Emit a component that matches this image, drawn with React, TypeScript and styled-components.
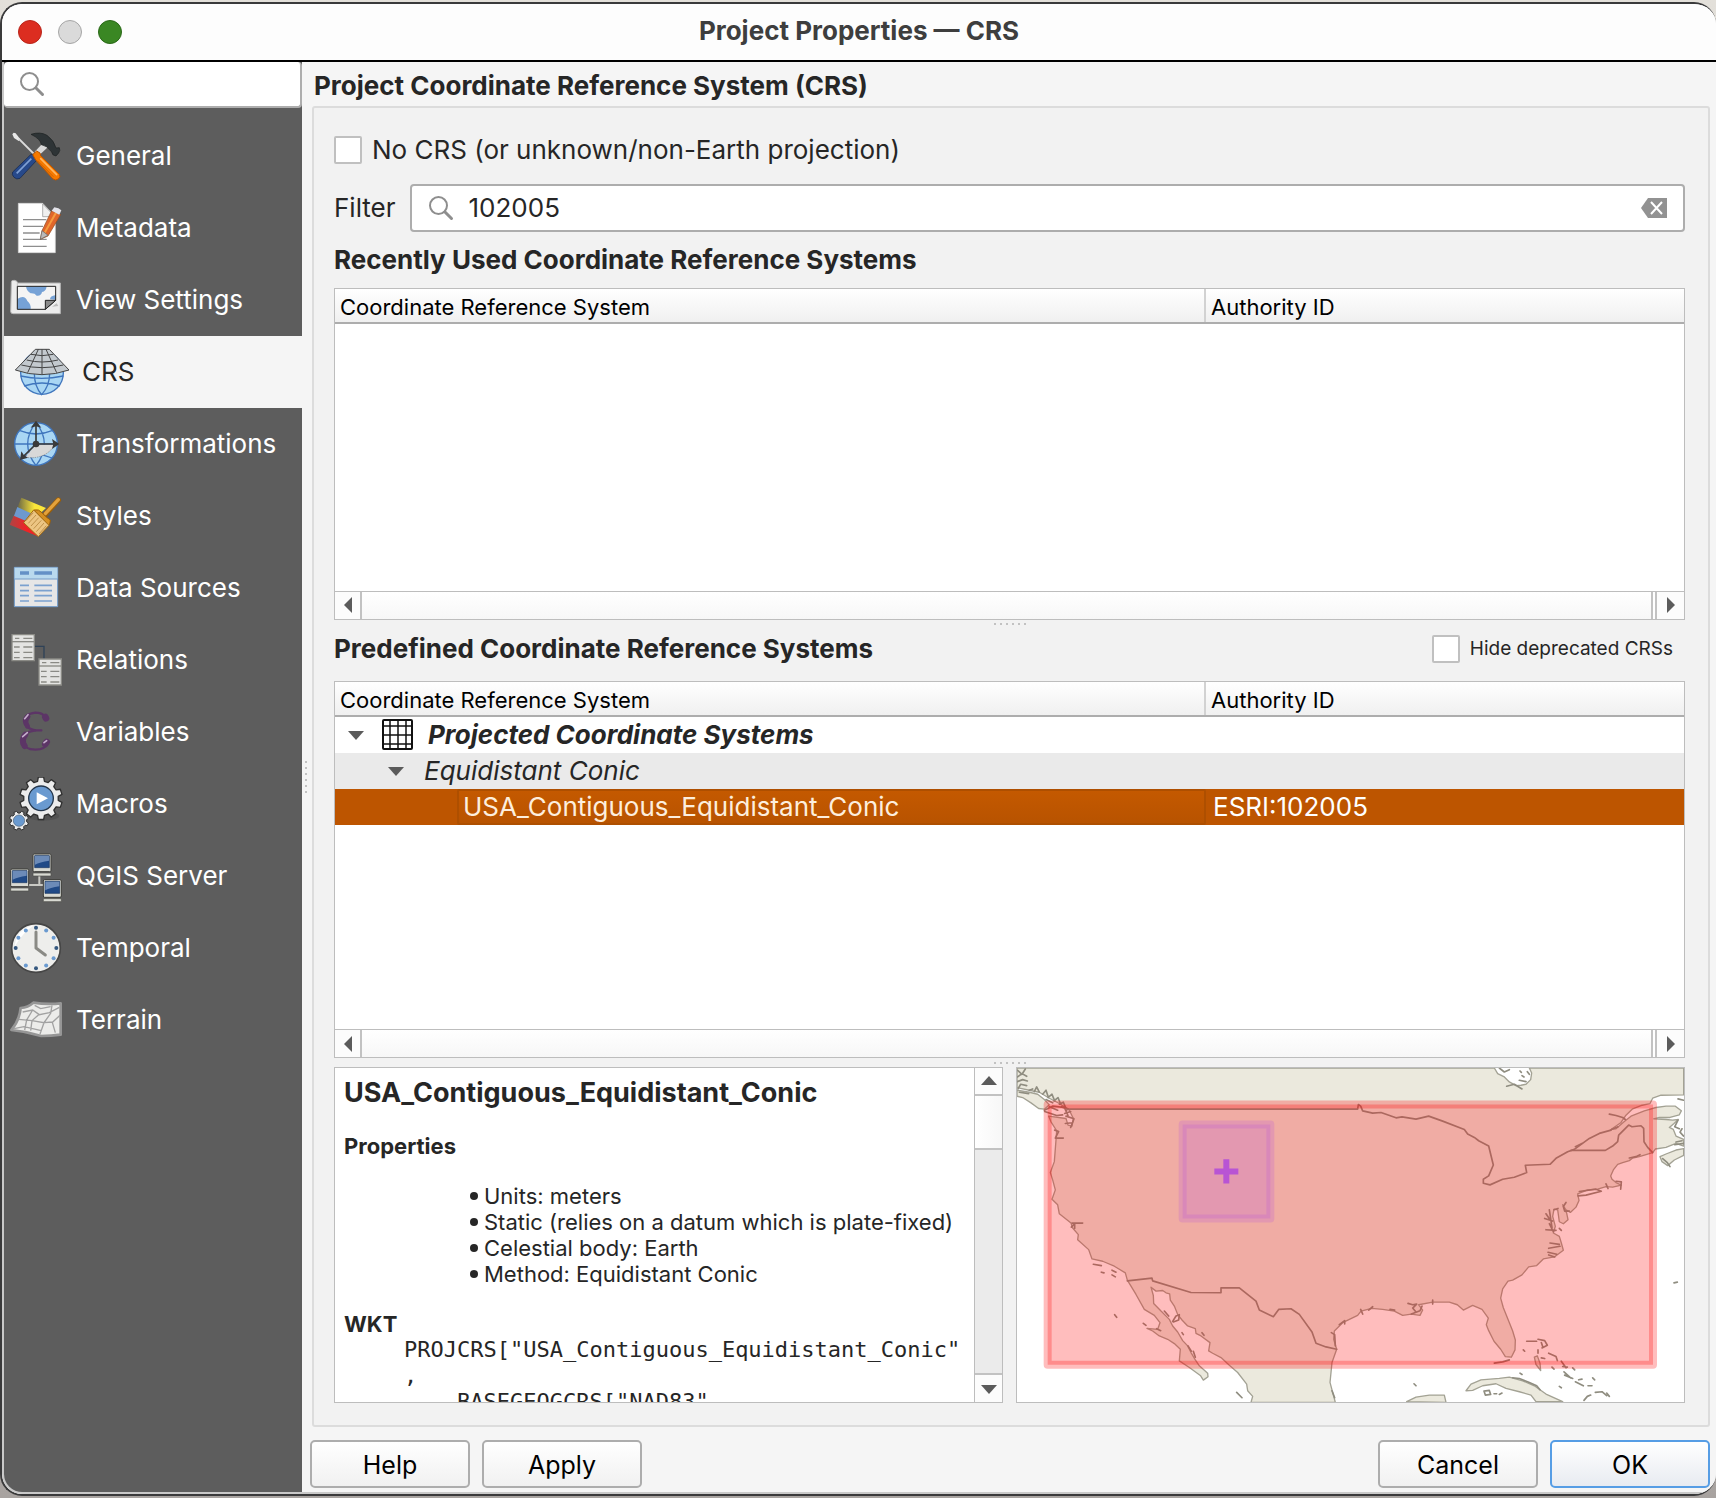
import React, { useState } from "react";
import styled, { createGlobalStyle } from "styled-components";

const GlobalStyle = createGlobalStyle`
  *, *::before, *::after { box-sizing: border-box; }
  body { margin: 0; }
  button, input { font: inherit; color: inherit; }
`;

const Desktop = styled.div`
  display: flex;
  height: 100vh;
  min-height: 1200px;
  padding: 2px 0;
  background: linear-gradient(#e3e0da, #a8a3a0);
  color: #262626;
  font-family: Inter, "Noto Sans", sans-serif;
  font-size: 26px;
  line-height: 32px;
`;

const Window = styled.div`
  flex: 1;
  min-width: 0;
  display: flex;
  flex-direction: column;
  overflow: hidden;
  border: 2px solid #3a3a3b;
  border-right-width: 0;
  border-radius: 22px;
  background: #fdfdfd;
`;

const TitleBar = styled.header`
  flex: none;
  display: grid;
  grid-template-columns: 1fr auto 1fr;
  align-items: center;
  height: 58px;
  padding: 0 16px;
  border-bottom: 2px solid #000;
  background: #fdfdfd;
`;

const Lights = styled.div`
  display: flex;
  gap: 16px;
`;

const Light = styled.button<{ $fill: string; $edge: string }>`
  width: 24px;
  height: 24px;
  padding: 0;
  border: 1px solid ${(p) => p.$edge};
  border-radius: 50%;
  background: ${(p) => p.$fill};
`;

const WindowTitle = styled.h1`
  margin: 0;
  padding-bottom: 2px;
  color: #3e3e3e;
  font-size: 26px;
  font-weight: 700;
`;

const Body = styled.div`
  flex: 1;
  min-height: 0;
  display: flex;
  border: solid #c9c9c9;
  border-width: 0 0 2px 2px;
  border-bottom-left-radius: 20px;
  overflow: hidden;
  background: #f5f5f5;
`;

const Sidebar = styled.aside`
  flex: none;
  width: 298px;
  background: #5d5d5d;
`;

const SidebarSearch = styled.label`
  display: flex;
  align-items: center;
  gap: 12px;
  height: 46px;
  padding: 0 12px 0 15px;
  border: solid #adadad;
  border-width: 0 2px 2px 0;
  border-radius: 4px;
  background: #fff;
`;

const BareInput = styled.input`
  flex: 1;
  min-width: 0;
  padding: 0;
  border: 0;
  outline: 0;
  background: transparent;
`;

const NavList = styled.ul`
  margin: 0;
  padding: 12px 0;
  list-style: none;
`;

const NavItem = styled.button<{ $active: boolean }>`
  display: flex;
  align-items: center;
  gap: 13px;
  width: 100%;
  height: 72px;
  padding: 0 0 0 ${(p) => (p.$active ? 11 : 5)}px;
  border: 0;
  background: ${(p) => (p.$active ? "#f5f5f5" : "transparent")};
  color: ${(p) => (p.$active ? "#262626" : "#fff")};
  text-align: left;
`;

const NavIcon = styled.svg`
  flex: none;
  width: 54px;
  height: 54px;
`;

const Splitter = styled.div<{ $vertical?: boolean }>`
  flex: none;
  display: flex;
  align-items: center;
  justify-content: center;
  ${(p) => (p.$vertical ? "width: 8px;" : "height: 9px;")}
  &::after {
    content: "";
    width: ${(p) => (p.$vertical ? 2 : 32)}px;
    height: ${(p) => (p.$vertical ? 32 : 2)}px;
    background: repeating-linear-gradient(
      ${(p) => (p.$vertical ? "180deg" : "90deg")},
      #c2c2c2 0 2px,
      transparent 2px 6px
    );
  }
`;

const Main = styled.main`
  flex: 1;
  min-width: 0;
  display: flex;
  flex-direction: column;
  padding: 0 6px 4px 0;
`;

const PageTitle = styled.h2`
  flex: none;
  margin: 0 4px;
  font-size: 26px;
  font-weight: 700;
  line-height: 44px;
  padding-top: 2px;
  height: 44px;
`;

const Group = styled.section`
  flex: 1;
  min-height: 0;
  display: flex;
  flex-direction: column;
  margin: 0 0 0 2px;
  padding: 24px 23px 22px 20px;
  border: 2px solid #dcdcdc;
  border-radius: 3px;
  background: #f2f2f2;
`;

const Check = styled.label<{ $small?: boolean }>`
  display: flex;
  align-items: center;
  gap: 10px;
  height: 36px;
  font-size: ${(p) => (p.$small ? 19 : 26)}px;
`;

const CheckBox = styled.input`
  appearance: none;
  flex: none;
  width: 28px;
  height: 28px;
  margin: 0;
  border: 2px solid #c0c0c0;
  border-radius: 2px;
  background: #fff;
  &:checked {
    background: #bd5500;
  }
`;

const FilterRow = styled.div`
  flex: none;
  display: flex;
  align-items: center;
  gap: 14px;
  margin-top: 16px;
`;

const FilterBox = styled.div`
  flex: 1;
  display: flex;
  align-items: center;
  gap: 15px;
  height: 48px;
  padding: 0 16px;
  border: 2px solid #adadad;
  border-radius: 4px;
  background: #fff;
`;

const ClearButton = styled.button`
  display: flex;
  padding: 0;
  border: 0;
  background: none;
`;

const SectionTitle = styled.h3`
  margin: 0;
  font-size: 26px;
  font-weight: 700;
  line-height: 56px;
`;

const SectionRow = styled.div`
  flex: none;
  display: flex;
  align-items: center;
  justify-content: space-between;
  height: 40px;
  margin-bottom: 12px;
  padding-right: 12px;
`;

const Tree = styled.div<{ $grow: number }>`
  flex: ${(p) => p.$grow} 1 0;
  min-height: 0;
  display: flex;
  flex-direction: column;
  border: 1px solid #bdbdbd;
  background: #fff;
`;

const TreeView = styled.div`
  flex: 1;
  min-height: 0;
  overflow: hidden;
`;

const Table = styled.table`
  width: 100%;
  table-layout: fixed;
  border-collapse: separate;
  border-spacing: 0;
`;

const HeadCell = styled.th`
  height: 35px;
  padding: 3px 5px 0;
  border-bottom: 2px solid #adadad;
  box-shadow: inset -2px 0 #d2d2d2;
  background: linear-gradient(#fff, #f0f0f0);
  color: #000;
  font-size: 22px;
  font-weight: 400;
  line-height: 30px;
  text-align: left;
  &:last-child {
    width: 478px;
    box-shadow: none;
  }
`;

const Row = styled.tr<{ $tone: string }>`
  height: 36px;
  background: ${(p) => p.$tone};
`;

const Cell = styled.td`
  height: 36px;
  padding: 0 0 0 7px;
  line-height: 32px;
  color: #fff;
`;

const TreeCell = styled.td<{ $depth: number }>`
  height: 36px;
  padding: 0 0 0 ${(p) => 11 + p.$depth * 40}px;
  line-height: 32px;
`;

const Node = styled.div`
  display: flex;
  align-items: center;
  gap: 16px;
`;

const RootName = styled.span`
  display: flex;
  align-items: center;
  gap: 14px;
  font-style: italic;
  font-weight: 700;
`;

const BranchName = styled.span`
  padding-left: 2px;
  font-style: italic;
`;

const LeafCell = styled.td`
  height: 36px;
  padding: 0 0 0 122px;
`;

const Leaf = styled.div`
  height: 36px;
  padding-left: 4px;
  border: 2px solid #ae4f00;
  border-radius: 2px;
  background: linear-gradient(#c45900, #b85300);
  color: #fdeedd;
  line-height: 32px;
`;

const HBar = styled.div`
  flex: none;
  display: flex;
  height: 28px;
  border-top: 1px solid #bdbdbd;
`;

const VBar = styled.div`
  flex: none;
  display: flex;
  flex-direction: column;
  width: 28px;
  border-left: 1px solid #bdbdbd;
  background: #ebebeb;
`;

const Stepper = styled.button<{ $width?: number; $height?: number }>`
  flex: none;
  display: flex;
  align-items: center;
  justify-content: center;
  width: ${(p) => p.$width ?? 27}px;
  height: ${(p) => p.$height ?? 27}px;
  padding: 0;
  border: 0;
  background: #fcfcfc;
`;

const HThumb = styled.div`
  flex: 1;
  margin-right: 2px;
  border: solid #c2c2c2;
  border-width: 0 2px;
  background: linear-gradient(#fff, #f7f7f7);
`;

const HEdge = styled.div`
  width: 2px;
  background: #c2c2c2;
`;

const VThumb = styled.div`
  height: 56px;
  border: solid #c2c2c2;
  border-width: 2px 0;
  background: linear-gradient(90deg, #fff, #f7f7f7);
`;

const VEdge = styled.div`
  height: 2px;
  margin-top: auto;
  background: #c2c2c2;
`;

const Panes = styled.div`
  flex: 337 1 0;
  min-height: 0;
  display: flex;
  gap: 13px;
`;

const Pane = styled.div`
  flex: 1 1 0;
  min-width: 0;
  display: flex;
  border: 1px solid #bdbdbd;
  background: #fff;
  overflow: hidden;
`;

const Details = styled.article`
  flex: 1;
  min-width: 0;
  overflow-x: hidden;
  overflow-y: auto;
  scrollbar-width: none;
  padding: 8px 0 0 9px;
  font-size: 22px;
  line-height: 26px;
`;

const DetailsTitle = styled.h4`
  margin: 0 0 23px;
  font-size: 27px;
  font-weight: 700;
  line-height: 34px;
`;

const DetailsHeading = styled.h5`
  margin: 0;
  font-size: 22px;
  font-weight: 700;
`;

const Bullets = styled.ul`
  margin: 24px 0;
  padding: 0 0 0 126px;
  list-style: none;
`;

const Bullet = styled.li`
  display: flex;
  align-items: center;
  gap: 6px;
  white-space: nowrap;
  &::before {
    content: "";
    width: 8px;
    height: 8px;
    border-radius: 50%;
    background: #262626;
  }
`;

const Wkt = styled.pre`
  margin: 0 0 0 60px;
  font-family: "DejaVu Sans Mono", "Liberation Mono", monospace;
  font-size: 22px;
  line-height: 26px;
`;

const MapSvg = styled.svg`
  flex: 1;
  width: 100%;
  height: 100%;
`;

const ButtonBar = styled.footer`
  flex: none;
  display: flex;
  gap: 12px;
  margin-top: 13px;
`;

const PushButton = styled.button<{ $primary?: boolean; $pushRight?: boolean }>`
  width: 160px;
  height: 48px;
  padding: 2px 0 0;
  margin-left: ${(p) => (p.$pushRight ? "auto" : "0")};
  border: 2px solid ${(p) => (p.$primary ? "#569de5" : "#adadad")};
  border-radius: 5px;
  background: linear-gradient(#fff, ${(p) => (p.$primary ? "#e8ebf1" : "#f1f1f1")});
  color: #000;
  font-size: 25px;
`;

const Hammer = () => (
  <NavIcon viewBox="27 387 162 162" aria-hidden="true">
    <path d="M37 403l4-5 6 2 14 18-5 5-14-9z" fill="#e8e8e8" />
    <path d="M56 416L104 464" stroke="#dcdcdc" strokeWidth="6" />
    <path d="M100 462l-8 2-54 52q-4 8 4 16t18 3l50-54-2-12z" fill="#27498a" stroke="#122448" strokeWidth="2" />
    <path d="M94 476L50 520" stroke="#7fa0d4" strokeWidth="5" />
    <path d="M130 428l14 13-28 26-12-12z" fill="#d8d8d8" />
    <path d="M93 403q28-9 48 3 22 16 27 38l10-1q4 8-2 16l-8 9q-12-1-13-12-14-20-31-22-2-17-31-31z" fill="#2e3436" stroke="#1b1f20" strokeWidth="2" />
    <path d="M98 464l12-11 10 6 2 8 56 56q5 8-3 14t-16 0l-52-57z" fill="#f57900" stroke="#b85400" strokeWidth="3" />
    <path d="M122 476l48 48" stroke="#ffb760" strokeWidth="5" strokeLinecap="round" />
    <path d="M112 482l48 48" stroke="#b85400" strokeWidth="2" />
  </NavIcon>
);

const Metadata = () => (
  <NavIcon viewBox="27 603 162 162" aria-hidden="true">
    <path d="M55 610h73l38 40v108H55z" fill="#fff" stroke="#d8d8d8" strokeWidth="2" />
    <path d="M128 612v38h37z" fill="#f0f0f0" stroke="#8c8c8c" strokeWidth="2" />
    <path d="M69 659h70M69 679h60M69 699h50M69 718h71M69 739h71" stroke="#8e8e8e" strokeWidth="4" />
    <path d="M155 632l27 12-38 64-23 10 5-26z" fill="#e0662a" stroke="#8f4a1c" strokeWidth="2" />
    <path d="M168 638l-34 60" stroke="#f59b3f" strokeWidth="6" />
    <path d="M126 692l18 14-23 12z" fill="#b9b9b9" stroke="#666" strokeWidth="2" />
    <path d="M155 632l8-10q14 1 21 9l-6 13z" fill="#e3e3ea" />
  </NavIcon>
);

const ViewSettings = () => (
  <NavIcon viewBox="27 819 162 162" aria-hidden="true">
    <path d="M34 846q0-6 9-5t10 8h128v92H40q-8 0-8-6z" fill="#ececec" stroke="#b5b5b5" strokeWidth="3" />
    <path d="M52 849v80" stroke="#c4c4c4" strokeWidth="3" />
    <path d="M52 859h115v42l-31 27H52z" fill="#f4f4f4" />
    <path d="M78 859h62q-2 16-14 17-3 13-16 11-6-8-18-7-12-6-14-21zM52 928V897q22-14 30 6 12 10 10 25zM167 885v14l-17-1q0-10 17-13z" fill="#76a2d6" />
    <path d="M52 859h115v42l-31 27H52z" fill="none" stroke="#222" strokeWidth="3" />
    <path d="M167 901h-31v27z" fill="#8a8a8a" stroke="#222" strokeWidth="3" />
    <path d="M156 920l14-10 5 8z" fill="#bbb" />
  </NavIcon>
);

const Crs = () => (
  <NavIcon viewBox="45 1035 162 162" aria-hidden="true">
    <circle cx="126" cy="1119" r="64" fill="#a9d6f4" stroke="#3f75bd" strokeWidth="4" />
    <path d="M103 1120q0 40 22 64 24-26 24-64M62 1128q62 14 128 0M72 1158q54-18 108 0" fill="none" stroke="#3f75bd" strokeWidth="4" />
    <path d="M106 1048h42l59 62q-82 28-161 0z" fill="#c3c9ce" stroke="#444" strokeWidth="3" />
    <path d="M126 1048v76M115 1048l-32 70M138 1048l32 70M93 1063q33 8 67 0M80 1080q46 12 94 0M64 1095q62 16 126 0" fill="none" stroke="#444" strokeWidth="3" />
  </NavIcon>
);

const Transformations = () => (
  <NavIcon viewBox="27 51 162 162" aria-hidden="true">
    <circle cx="108" cy="132" r="64" fill="#a9d6f4" stroke="#3f75bd" strokeWidth="4" />
    <path d="M43 132h130M60 92q48 20 96 0M60 174q48-22 96 0M108 67q-50 64 0 130M108 67q50 64 0 130" fill="none" stroke="#3f75bd" strokeWidth="4" />
    <path d="M108 134h56q-22 44-88 38z" fill="#d8d8d8" />
    <path d="M76 172q58 8 88-36" fill="none" stroke="#777" strokeWidth="2" strokeDasharray="4 3" />
    <path d="M108 132V74M108 132h58M108 132l-38 38" stroke="#3a3a3a" strokeWidth="5" />
    <path d="M108 62l16 21-16-4-16 4zM178 132l-22 15 4-15-4-15zM60 180l4-26 8 12 12 7z" fill="#3a3a3a" />
    <circle cx="108" cy="132" r="10" fill="#3a3a3a" />
  </NavIcon>
);

const Styles = () => (
  <NavIcon viewBox="27 267 162 162" aria-hidden="true">
    <defs>
      <linearGradient id="yellow" x1="0" x2="1">
        <stop offset="0" stopColor="#6a6644" />
        <stop offset=".6" stopColor="#fbe63a" />
      </linearGradient>
      <linearGradient id="red" x1="0" x2="1">
        <stop offset="0" stopColor="#b04444" />
        <stop offset=".6" stopColor="#ee2426" />
      </linearGradient>
    </defs>
    <path d="M64 293l74 31-28 26-58-27z" fill="url(#yellow)" />
    <path d="M52 321l52 24-20 30-43-25z" fill="#6d99cf" />
    <path d="M41 347l46 20 26 42-84-35z" fill="url(#red)" />
    <path d="M175 300L136 343" stroke="#9c5f08" strokeWidth="16" strokeLinecap="round" />
    <path d="M175 299L136 341" stroke="#e3a23c" strokeWidth="10" strokeLinecap="round" />
    <path d="M102 330q14-4 24 8 12 14 25 22 0 10-5 17z" fill="#d48f22" stroke="#9c5f08" strokeWidth="3" />
    <path d="M101 330l46 46-32 34-44-42z" fill="#ecc583" stroke="#a3690f" strokeWidth="3" />
    <path d="M100 338l-22 24M108 345l-23 25M116 353l-23 25M124 361l-23 25M132 369l-23 26M139 377l-22 25" stroke="#a8772d" strokeWidth="2" />
  </NavIcon>
);

const DataSources = () => (
  <NavIcon viewBox="27 483 162 162" aria-hidden="true">
    <path d="M43 502h130v118H43z" fill="#e6e6e6" stroke="#6f9bcb" strokeWidth="3" />
    <path d="M44 503h128v33H44z" fill="#b9d9ee" />
    <path d="M43 537h130" stroke="#6f9bcb" strokeWidth="3" />
    <path d="M60 519h27M103 519h53" stroke="#6490c6" strokeWidth="10" />
    <path d="M60 556h27M103 556h53M60 572h27M103 572h53M60 587h27M103 587h53M60 603h27M103 603h53" stroke="#7ba1cf" strokeWidth="5" />
  </NavIcon>
);

const MiniTable = ({ x, y }: { x: number; y: number }) => (
  <g transform={`translate(${x} ${y})`}>
    <path d="M0 0h67v78H0z" fill="#e4e4e2" stroke="#8a8a85" strokeWidth="4" />
    <path d="M0 21h67" stroke="#8a8a85" strokeWidth="4" />
    <path d="M9 11h13M34 11h27M6 37h17M34 37h27M6 53h17M34 53h27M6 69h17M34 69h27" stroke="#8a8a85" strokeWidth="4" />
  </g>
);

const Relations = () => (
  <NavIcon viewBox="27 699 162 162" aria-hidden="true">
    <path d="M104 739h28v38" fill="none" stroke="#2f4257" strokeWidth="4" />
    <MiniTable x={36} y={704} />
    <MiniTable x={117} y={777} />
  </NavIcon>
);

const Variables = () => (
  <NavIcon viewBox="27 915 162 162" aria-hidden="true">
    <g fill="none" stroke="#5c3566" strokeLinecap="round">
      <path d="M136 950q-10-12-30-12-34 4-34 26 4 22 34 27" strokeWidth="7" />
      <path d="M84 950q-12 14-2 28" strokeWidth="15" />
      <path d="M124 991h-18q-40 6-40 32 6 26 40 26 30 0 38-22" strokeWidth="7" />
      <path d="M76 1004q-14 16-2 34" strokeWidth="18" />
      <path d="M136 951l2 4M140 1026l-4 6" strokeWidth="20" />
      <path d="M74 956l10-12M68 1010l14-12M132 1028l8-6" stroke="#c4aecb" strokeWidth="5" />
    </g>
  </NavIcon>
);

const gearPath = (cx: number, cy: number, outer: number, inner: number, teeth: number) => {
  const step = (Math.PI * 2) / teeth;
  const at = (r: number, a: number) => `${(cx + r * Math.cos(a)).toFixed(1)} ${(cy + r * Math.sin(a)).toFixed(1)}`;
  let d = "";
  for (let i = 0; i < teeth; i++) {
    const a = i * step + step / 2;
    d += `${i ? "L" : "M"}${at(inner, a - step * 0.32)}L${at(outer, a - step * 0.2)}L${at(outer, a + step * 0.2)}L${at(inner, a + step * 0.32)}`;
  }
  return d + "Z";
};

const Macros = () => (
  <NavIcon viewBox="27 51 162 162" aria-hidden="true">
    <ellipse cx="128" cy="168" rx="50" ry="14" fill="#4b4b4b" opacity=".6" />
    <path d={gearPath(123, 115, 64, 52, 10)} fill="#ececec" stroke="#2f2f2f" strokeWidth="4" strokeLinejoin="round" />
    <circle cx="123" cy="115" r="37" fill="#6a9ad0" stroke="#24364b" strokeWidth="4" />
    <path d="M110 97v36l34-18z" fill="#fff" />
    <path d={gearPath(57, 182, 29, 23, 8)} fill="#ececec" stroke="#2f2f2f" strokeWidth="3" strokeLinejoin="round" />
    <circle cx="57" cy="182" r="17" fill="#6a9ad0" stroke="#4b6076" strokeWidth="2" />
  </NavIcon>
);

const Monitor = ({ x, y }: { x: number; y: number }) => (
  <g transform={`translate(${x} ${y})`}>
    <rect width="54" height="53" rx="4" fill="#d9dad3" stroke="#3c3c38" strokeWidth="3" />
    <path d="M5 5h44v36H5z" fill="#204a87" stroke="#16335f" strokeWidth="2" />
    <path d="M6 6h42v14Q20 24 6 32z" fill="#6c8bb8" />
    <path d="M0 57h54v9H0z" fill="#d9dad3" stroke="#4d4d48" strokeWidth="2" />
  </g>
);

const Server = () => (
  <NavIcon viewBox="27 267 162 162" aria-hidden="true">
    <path d="M118 346v30M86 375h44" stroke="#c9c9c4" strokeWidth="6" />
    <Monitor x={99} y={282} />
    <Monitor x={32} y={327} />
    <Monitor x={130} y={359} />
  </NavIcon>
);

const Temporal = () => (
  <NavIcon viewBox="27 483 162 162" aria-hidden="true">
    <circle cx="108" cy="564" r="73" fill="#eeeeec" stroke="#464646" strokeWidth="5" />
    <path d="M44 560q4-52 58-64-34 22-58 64z" fill="#fff" />
    {Array.from({ length: 12 }, (_, i) => (
      <circle
        key={i}
        cx={108 + 61 * Math.sin((i * Math.PI) / 6)}
        cy={564 - 61 * Math.cos((i * Math.PI) / 6)}
        r="6"
        fill={i % 3 ? "#6a9ad0" : "#35587f"}
      />
    ))}
    <path d="M108 516v48l28 21" fill="none" stroke="#8a8a85" strokeWidth="9" strokeLinecap="round" strokeLinejoin="round" />
  </NavIcon>
);

const Terrain = () => (
  <NavIcon viewBox="27 699 162 162" aria-hidden="true">
    <path d="M62 744q22-2 38-16 40 6 82 2v94q-28 4-58 4-46-14-90-18 24-28 28-66z" fill="#ececea" stroke="#969696" strokeWidth="8" strokeLinejoin="round" />
    <path d="M104 736l18 10 30-6M68 756l30-6 20 14 30-6 30-16M56 778l40 4 20-18M98 750l-18 30-6 30M96 782l36 6 20-28 4-24M132 788l26-2 22-20M132 788l-12 34M96 782l-4 30M156 784l10 34M42 806l30-6 52 12" fill="none" stroke="#a2a2a2" strokeWidth="4" />
  </NavIcon>
);

const pages: { name: string; Icon: React.FC }[] = [
  { name: "General", Icon: Hammer },
  { name: "Metadata", Icon: Metadata },
  { name: "View Settings", Icon: ViewSettings },
  { name: "CRS", Icon: Crs },
  { name: "Transformations", Icon: Transformations },
  { name: "Styles", Icon: Styles },
  { name: "Data Sources", Icon: DataSources },
  { name: "Relations", Icon: Relations },
  { name: "Variables", Icon: Variables },
  { name: "Macros", Icon: Macros },
  { name: "QGIS Server", Icon: Server },
  { name: "Temporal", Icon: Temporal },
  { name: "Terrain", Icon: Terrain },
];

const SearchIcon = () => (
  <svg width="26" height="26" viewBox="0 0 26 26" fill="none" stroke="#8e8e8e" aria-hidden="true">
    <circle cx="10.5" cy="10.5" r="8.5" strokeWidth="2" />
    <path d="M17 17l6.500 6.500" strokeWidth="3" strokeLinecap="round" />
  </svg>
);

const ClearIcon = () => (
  <svg width="26" height="20" viewBox="0 0 26 20" aria-hidden="true">
    <path d="M7 0h19v20H7L0 10z" fill="#929292" />
    <path d="M10 4l11 12M21 4L10 16" stroke="#fff" strokeWidth="2" />
  </svg>
);

const arrows = {
  left: "M14 2v16L6 10z",
  right: "M6 2v16l8-8z",
  up: "M2 14h16l-8-9z",
  down: "M2 6h16l-8 9z",
};

const Arrow = ({ to }: { to: keyof typeof arrows }) => (
  <svg width="20" height="20" viewBox="0 0 20 20" aria-hidden="true">
    <path d={arrows[to]} fill="#5b5b5b" />
  </svg>
);

const GridIcon = () => (
  <svg width="32" height="32" viewBox="0 0 32 32" fill="none" stroke="#111" aria-hidden="true">
    <rect x="1" y="1" width="29" height="29" rx="1" strokeWidth="2" fill="#fff" />
    <path d="M8 1v29M16 1v29M24 1v29M1 7h29M1 16h29M1 25h29" strokeWidth="1.500" />
  </svg>
);

const HorizontalBar = () => (
  <HBar>
    <Stepper type="button" aria-label="Scroll left" $width={25}><Arrow to="left" /></Stepper>
    <HThumb />
    <HEdge />
    <Stepper type="button" aria-label="Scroll right"><Arrow to="right" /></Stepper>
  </HBar>
);

const TreeHead = () => (
  <thead>
    <tr>
      <HeadCell scope="col">Coordinate Reference System</HeadCell>
      <HeadCell scope="col">Authority ID</HeadCell>
    </tr>
  </thead>
);

const mainland =
  "M53 173H1485L1495 190 1515 200 1530 215 1550 226 1565 225 1580 222 1594 208 1597 188 1590 173H2053V254L1985 255 1960 264 1952 280 1925 286 1900 296 1880 315 1864 338 1835 358 1850 356 1875 334 1895 318 1935 302 1970 292 2000 288 2028 288 2046 302 2040 314 2012 322 1980 322 1963 326 2000 328 2020 330 2037 328 2024 340 2010 352 2022 358 2030 378 2053 388V408L2030 400 2000 412 1968 417 1960 428 1940 434 1920 440 1900 444 1890 452 1870 458 1855 463 1842 480 1834 498 1838 508 1850 518 1866 526 1840 532 1820 530 1795 538 1765 540 1735 552 1739 572 1730 592 1713 608 1700 600 1690 585 1702 610 1706 630 1692 642 1680 636 1675 600 1664 598 1660 620 1668 650 1662 670 1680 680 1686 700 1692 722 1665 742 1632 748 1612 768 1588 772 1568 796 1540 812 1526 815 1510 838 1504 866 1512 895 1528 935 1540 965 1548 992 1547 1022 1536 1044 1518 1042 1504 1020 1484 996 1468 964 1461 946 1467 926 1448 900 1420 888 1392 902 1374 886 1350 878 1300 878 1258 886 1270 902 1262 918 1236 914 1210 918 1185 905 1150 900 1117 897 1085 905 1075 918 1030 940 1005 965 1003 990 1012 1020 998 1060 992 1120 1000 1150 1008 1180H755L760 1162 745 1145 742 1125 715 1090 690 1068 665 1045 640 1032 628 1025 632 1000 605 980 590 972 588 958 565 950 548 932 535 915 525 890 513 872 511 853 500 850 490 843 470 845 455 833 462 858 463 882 485 905 510 930 520 950 535 968 550 994 565 1010 575 1030 588 1052 600 1070 625 1092 626 1103 612 1113 604 1100 570 1075 540 1055 543 1020 525 1003 505 990 480 980 460 965 443 957 475 960 482 940 465 918 435 900 410 855 395 830 384 812 378 790 345 770 310 755 278 748 268 720 235 690 237 675 220 655 215 640 180 612 175 585 158 568 168 540 160 510 153 488 165 455 170 390 172 362 155 335 148 318 200 325 206 345 218 348 222 325 210 300 180 280 150 264 120 246 90 240 53 232Z";

const islands = [
  "M53 240L90 246 115 252 135 268 150 284 135 297 118 295 95 278 70 262 53 258Z",
  "M1982 440L2000 432 2030 420 2053 416V436L2025 450 2005 467 1988 455Z",
  "M1400 1145L1415 1125 1445 1112 1500 1108 1530 1104 1570 1115 1605 1130 1640 1155 1690 1178H1610L1595 1158 1560 1148 1520 1138 1490 1124 1450 1130 1420 1144Z",
  "M1222 1178L1250 1164 1290 1158 1335 1158 1340 1180Z",
  "M1605 1044L1614 1040 1622 1062 1624 1084 1610 1066Z",
];

const thinLines = [
  "M205 297H1075L1077 283 1084 288 1090 302 1120 309 1145 307 1190 323 1208 320 1250 327 1288 318 1330 333 1395 358 1405 372 1425 382 1438 392 1468 408 1482 465 1468 498 1452 508 1452 520 1472 525 1510 508 1545 502 1582 488 1578 466 1652 463 1670 445 1705 425 1725 418 1770 385 1800 370 1835 360",
  "M1715 421H1818L1840 408 1855 395 1858 375 1888 345 1898 350 1925 347 1933 355 1934 395 1945 412 1960 428",
  "M384 814L458 806 460 814 575 849 665 850V835H720L770 875 780 902 822 922 838 900 875 898 900 915 938 968 950 1002 980 1013 1012 1020",
];

const coastDetail = [
  "M55 180L68 192 78 176M54 200L68 190 82 198M54 214L70 208 84 212M56 236L64 222 82 226M90 240L100 236M105 244L112 230 120 246M130 252L140 240 146 258M146 262L158 252 166 272M164 272L176 262 184 282M180 282L192 276 202 300M60 246L88 250M140 268L160 278M150 290L175 300M186 290L206 296M196 310L214 304",
  "M135 300L160 288 195 292 206 316M136 304L172 316 190 314M200 318L224 326 214 352M198 340L218 338M166 360L178 364 168 384 192 384M218 640H250M216 652L226 642 226 656",
  "M282 764L306 768M306 788L314 790M338 782L350 788M338 796L348 802M346 916L352 924M432 942L440 948M472 958L484 964",
  "M495 905L508 920M520 936L530 920 540 916 538 932 522 938M566 1010L576 1026M582 1026L588 1044M548 970L552 976M608 970L614 978M712 1150L728 1166M998 1145L1006 1166M996 970L1006 976 1008 1010M1020 946L1036 934 1036 944M1084 900L1090 914M1108 902L1120 892",
  "M1500 173L1515 185 1530 178M1522 228L1545 222 1568 236M1560 210L1580 214M1562 182L1566 186M1568 196L1574 200M1584 184L1590 192",
  "M1830 312L1850 316 1870 322 1878 328M1728 410L1748 400M1836 358L1856 350M1740 545L1790 538 1806 544 1760 556 1736 558M1820 522L1826 536M1850 514L1866 516 1864 538M1890 444L1910 440 1922 434M1700 578L1692 590 1696 604 1710 604",
  "M1640 612L1652 630M1636 626L1660 634M1650 600L1658 654M1640 660L1670 662M1664 600L1676 596M1650 642L1662 666M1680 656L1686 662M1652 700L1680 704M1648 716L1682 710M1646 728L1672 734M1648 736L1666 742",
  "M1226 882L1240 886 1252 884 1240 896 1250 908M1236 914L1262 904 1268 890M1172 900L1186 902M1300 872V884M1485 1062L1510 1058 1530 1052",
  "M1582 996L1612 996M1616 990L1636 994 1644 1008 1628 1016M1626 1000L1630 1012M1572 1022L1576 1026M1616 1022V1032M1626 1046L1636 1048M1648 1032L1670 1042 1674 1054M1686 1056L1700 1076M1690 1072L1704 1074M1658 1074L1664 1080M1694 1088L1714 1106M1696 1098L1720 1108M1720 1076L1726 1082M1728 1118L1752 1130M1738 1112L1748 1110M1766 1130L1778 1130M1780 1106L1786 1112M1680 1132L1686 1136M1788 1150L1808 1148 1822 1160M1822 1152L1830 1162M1754 1174L1764 1162 1774 1158M1562 1092L1568 1096",
  "M1454 1146L1470 1144 1474 1156 1458 1158ZM1484 1154H1492M1500 1156L1508 1152M1244 1124L1250 1130M1540 1106L1560 1108 1590 1120 1612 1130 1622 1142M2024 820L2034 818",
  "M2036 330L2026 350 2040 356M2048 356L2042 366 2053 378M2036 266L2053 270M2030 396L2048 392M2026 404L2053 400M1990 446L2004 458 2012 470",
];

const ExtentMap = () => (
  <MapSvg viewBox="53 173 2001 1005" preserveAspectRatio="none" role="img" aria-label="Extent of the selected coordinate reference system">
    <g fill="#ebe9dd" stroke="#a3a294" strokeWidth="4" strokeLinejoin="round">
      <path d={mainland} />
      {islands.map((d) => <path key={d} d={d} />)}
    </g>
    <g fill="none" stroke="#8f8d80" strokeWidth="5" strokeLinejoin="round" strokeLinecap="round">
      {thinLines.map((d) => <path key={d} d={d} />)}
      {coastDetail.map((d) => <path key={d} d={d} />)}
    </g>
    <g strokeWidth="24" strokeLinejoin="round">
      <path d="M145 283H1961V1067H145Z" fill="#ff0000" fillOpacity=".26" stroke="#ff0000" strokeOpacity=".26" />
      <path d="M550 343H813V626H550Z" fill="#b450dc" fillOpacity=".22" stroke="#b450dc" strokeOpacity=".22" />
    </g>
    <path d="M681 448v73M645 485h72" stroke="#b854d4" strokeWidth="18" />
  </MapSvg>
);

export default function App() {
  const [page, setPage] = useState("CRS");
  const [filter, setFilter] = useState("102005");
  return (
    <>
      <GlobalStyle />
      <Desktop>
        <Window>
          <TitleBar>
            <Lights>
              <Light type="button" aria-label="Close" $fill="#dc2d20" $edge="#b8251a" />
              <Light type="button" aria-label="Minimize" $fill="#dadada" $edge="#a5a5a5" />
              <Light type="button" aria-label="Zoom" $fill="#3a8723" $edge="#2a6818" />
            </Lights>
            <WindowTitle>Project Properties — CRS</WindowTitle>
          </TitleBar>
          <Body>
            <Sidebar>
              <SidebarSearch>
                <SearchIcon />
                <BareInput type="text" aria-label="Search settings" />
              </SidebarSearch>
              <nav>
                <NavList>
                  {pages.map(({ name, Icon }) => (
                    <li key={name}>
                      <NavItem type="button" $active={name === page} onClick={() => setPage(name)}>
                        <Icon />
                        {name}
                      </NavItem>
                    </li>
                  ))}
                </NavList>
              </nav>
            </Sidebar>
            <Splitter $vertical />
            <Main>
              <PageTitle>Project Coordinate Reference System (CRS)</PageTitle>
              <Group>
                <Check>
                  <CheckBox type="checkbox" />
                  No CRS (or unknown/non-Earth projection)
                </Check>
                <FilterRow>
                  <label htmlFor="filter">Filter</label>
                  <FilterBox>
                    <SearchIcon />
                    <BareInput id="filter" type="text" value={filter} onChange={(e) => setFilter(e.target.value)} />
                    <ClearButton type="button" aria-label="Clear filter" onClick={() => setFilter("")}>
                      <ClearIcon />
                    </ClearButton>
                  </FilterBox>
                </FilterRow>
                <SectionTitle>Recently Used Coordinate Reference Systems</SectionTitle>
                <Tree $grow={331}>
                  <TreeView>
                    <Table>
                      <TreeHead />
                    </Table>
                  </TreeView>
                  <HorizontalBar />
                </Tree>
                <Splitter />
                <SectionRow>
                  <SectionTitle>Predefined Coordinate Reference Systems</SectionTitle>
                  <Check $small>
                    <CheckBox type="checkbox" />
                    Hide deprecated CRSs
                  </Check>
                </SectionRow>
                <Tree $grow={377}>
                  <TreeView>
                    <Table>
                      <TreeHead />
                      <tbody>
                        <Row $tone="#fff">
                          <TreeCell $depth={0} colSpan={2}>
                            <Node>
                              <Arrow to="down" />
                              <RootName>
                                <GridIcon />
                                Projected Coordinate Systems
                              </RootName>
                            </Node>
                          </TreeCell>
                        </Row>
                        <Row $tone="#eaeaea">
                          <TreeCell $depth={1} colSpan={2}>
                            <Node>
                              <Arrow to="down" />
                              <BranchName>Equidistant Conic</BranchName>
                            </Node>
                          </TreeCell>
                        </Row>
                        <Row $tone="#bd5500">
                          <LeafCell>
                            <Leaf>USA_Contiguous_Equidistant_Conic</Leaf>
                          </LeafCell>
                          <Cell>ESRI:102005</Cell>
                        </Row>
                      </tbody>
                    </Table>
                  </TreeView>
                  <HorizontalBar />
                </Tree>
                <Splitter />
                <Panes>
                  <Pane>
                    <Details>
                      <DetailsTitle>USA_Contiguous_Equidistant_Conic</DetailsTitle>
                      <DetailsHeading>Properties</DetailsHeading>
                      <Bullets>
                        <Bullet>Units: meters</Bullet>
                        <Bullet>Static (relies on a datum which is plate-fixed)</Bullet>
                        <Bullet>Celestial body: Earth</Bullet>
                        <Bullet>Method: Equidistant Conic</Bullet>
                      </Bullets>
                      <DetailsHeading>WKT</DetailsHeading>
                      <Wkt>{'PROJCRS["USA_Contiguous_Equidistant_Conic"\n,\n    BASEGEOGCRS["NAD83"'}</Wkt>
                    </Details>
                    <VBar>
                      <Stepper type="button" aria-label="Scroll up" $height={26}><Arrow to="up" /></Stepper>
                      <VThumb />
                      <VEdge />
                      <Stepper type="button" aria-label="Scroll down"><Arrow to="down" /></Stepper>
                    </VBar>
                  </Pane>
                  <Pane>
                    <ExtentMap />
                  </Pane>
                </Panes>
              </Group>
              <ButtonBar>
                <PushButton type="button">Help</PushButton>
                <PushButton type="button">Apply</PushButton>
                <PushButton type="button" $pushRight>Cancel</PushButton>
                <PushButton type="button" $primary>OK</PushButton>
              </ButtonBar>
            </Main>
          </Body>
        </Window>
      </Desktop>
    </>
  );
}
